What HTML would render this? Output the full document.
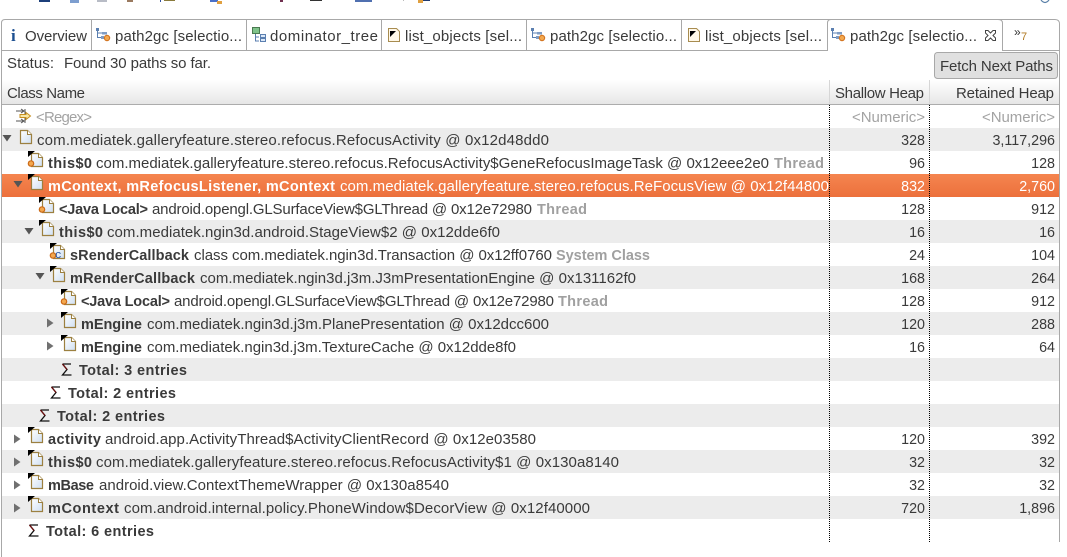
<!DOCTYPE html>
<html><head><meta charset="utf-8"><style>
html,body{margin:0;padding:0;background:#fff;width:1067px;height:557px;overflow:hidden}
svg{display:block}
text{font-family:"Liberation Sans",sans-serif;font-size:15px;fill:#3a3a3a;white-space:pre}
.b{font-weight:bold;font-size:14.5px}
.g{fill:#a0a0a0;font-weight:bold;font-size:14.5px}
.f{fill:#a3a3a3}
.w{fill:#fff}
.e{text-anchor:end}
.nums text{font-size:14.3px}
</style></head><body>
<svg width="1067" height="557" viewBox="0 0 1067 557" xmlns="http://www.w3.org/2000/svg">
<defs>
<linearGradient id="hd" x1="0" y1="0" x2="0" y2="1"><stop offset="0" stop-color="#fff"/><stop offset="1" stop-color="#e6e6e6"/></linearGradient>
<linearGradient id="sel" x1="0" y1="0" x2="0" y2="1"><stop offset="0" stop-color="#f5854f"/><stop offset="1" stop-color="#ec703c"/></linearGradient>
<linearGradient id="pg" x1="0" y1="0" x2="1" y2="1"><stop offset="0" stop-color="#fff"/><stop offset="1" stop-color="#cfdff2"/></linearGradient>
<g id="page"><path d="M.5.5H7.5L11.5 4.5V13.5H.5Z" fill="url(#pg)" stroke="#9c8040" stroke-width="1.2"/><path d="M7.5.5V4.5H11.5" fill="#fff" stroke="#9c8040"/></g>
<g id="tri"><path d="M0 0H7L0 6Z" fill="#000"/></g>
<g id="obj"><use href="#page" x="3" y="2"/><use href="#tri"/></g>
<g id="root"><use href="#page" x="3" y="2"/><use href="#tri"/><circle cx="3" cy="12.5" r="2.7" fill="#f3a84f" stroke="#cc6a18" stroke-width="1.2"/></g>
<g id="sum"><path d="M.5 1H9M.5 1L5 6.5L.5 12H9.5" fill="none" stroke="#111" stroke-width="1.3"/><path d="M.5 1L5 6.5" stroke="#701010" stroke-width="1.3"/></g>
<path id="ad" d="M-4.5-3H4.5L0 3.5Z" fill="#555"/>
<path id="ar" d="M-3-4.5L3.5 0L-3 4.5Z" fill="#707070"/>
<g id="p2g"><path d="M1.5 1V9.5H7M1.5 5H7" fill="none" stroke="#5b7fb0"/><rect x="0" y="0" width="3" height="3" fill="#5b7fb0"/><rect x="6" y="4" width="5" height="2.5" fill="#7f9cc4"/><rect x="5" y="8" width="3" height="3" fill="#7f9cc4"/><circle cx="11" cy="10" r="2.7" fill="#f3a84f" stroke="#d0701c"/></g>
<g id="lst"><path d="M.5.5H8.5L11.5 3.5V13.5H.5Z" fill="#fff8e8" stroke="#a88c50"/><path d="M2 3H8L2 9Z" fill="#000"/></g>
</defs>

<!-- top toolbar fragments -->
<g>
<rect x="39" y="0" width="11" height="2" fill="#1c3f7a"/><rect x="70" y="0" width="9" height="3" fill="#7d9ecf"/><rect x="97" y="0" width="10" height="2" fill="#b8bcc6"/>
<rect x="127" y="0" width="6" height="2" fill="#9a7a60"/><rect x="160" y="0" width="1" height="2" fill="#3050a0"/><rect x="164" y="0" width="11" height="1" fill="#8a7a3c"/>
<rect x="210" y="0" width="8" height="2" fill="#4a70c8"/><rect x="217" y="1" width="5" height="3" fill="#e0a040"/><rect x="280" y="0" width="3" height="2" fill="#703050"/>
<rect x="310" y="0" width="12" height="1" fill="#333"/><rect x="355" y="0" width="17" height="2" fill="#5070b0"/><rect x="403" y="0" width="1" height="1" fill="#bbb"/>
<rect x="418" y="0" width="5" height="3" fill="#e0a040"/><rect x="423" y="0" width="7" height="1" fill="#203a70"/><path d="M1041 0Q1045 5 1049 0" fill="none" stroke="#5a80a8" stroke-width="1.2"/>
</g>

<!-- frame -->
<path d="M1.5 557V23Q1.5 19.5 5 19.5H1055Q1059.5 19.5 1059.5 24V542" fill="none" stroke="#a8a8a8"/>
<path d="M1.5 50.5H827.5V23Q827.5 19.5 831 19.5H998Q1002.5 19.5 1002.5 23V50.5H1059.5" fill="#fff" stroke="#a8a8a8"/>
<path d="M91.5 20V50M246.5 20V50M381.5 20V50M526.5 20V50M681.5 20V50" stroke="#a8a8a8"/>

<!-- tabs -->
<text x="11" y="41" style="font-family:'Liberation Serif',serif;font-weight:bold;font-size:17px;fill:#1c4f90">i</text>
<text x="25" y="41" textLength="62">Overview</text>
<use href="#p2g" x="96" y="28"/><text x="115" y="41" textLength="127">path2gc [selectio...</text>
<g transform="translate(252,27)"><rect x=".5" y=".5" width="7" height="6" fill="#7fc38a" stroke="#4a7a50"/><path d="M3.5 7V14H7M3.5 10H7" fill="none" stroke="#5b7fb0"/><rect x="8.5" y="7.5" width="5" height="3" fill="#dbe8f8" stroke="#5b7fb0"/><rect x="8.5" y="11.5" width="5" height="3" fill="#dbe8f8" stroke="#5b7fb0"/></g>
<text x="270" y="41" textLength="108">dominator_tree</text>
<use href="#lst" x="388" y="28"/><text x="405" y="41" textLength="117">list_objects [sel...</text>
<use href="#p2g" x="531" y="28"/><text x="550" y="41" textLength="127">path2gc [selectio...</text>
<use href="#lst" x="688" y="28"/><text x="705" y="41" textLength="117">list_objects [sel...</text>
<use href="#p2g" x="831" y="28"/><text x="850" y="41" textLength="127">path2gc [selectio...</text>
<path d="M985.5 30.5H988L990.5 33L993 30.5H995.5V33L993 35.5L995.5 38V40.5H993L990.5 38L988 40.5H985.5V38L988 35.5L985.5 33Z" fill="#fff" stroke="#444" stroke-width="1"/>
<text x="1014" y="36" style="font-size:12px;fill:#333">»</text><text x="1021" y="40" style="font-size:11px;fill:#b07820">7</text>

<!-- status -->
<text x="7" y="68" textLength="47">Status:</text>
<text x="64" y="68" textLength="147">Found 30 paths so far.</text>
<rect x="934.5" y="52.5" width="123" height="26" rx="3" fill="#e0e0e0" stroke="#a8a8a8"/>
<text x="940" y="71" textLength="113">Fetch Next Paths</text>

<!-- header -->
<rect x="2" y="80" width="1057" height="24" fill="url(#hd)"/>
<rect x="2" y="104" width="1057" height="1" fill="#acacac"/>
<rect x="829" y="80" width="1" height="24" fill="#d6d6d6"/><rect x="929" y="80" width="1" height="24" fill="#d6d6d6"/>
<text x="7" y="98" textLength="78">Class Name</text>
<text x="835" y="98" textLength="89">Shallow Heap</text>
<text x="956" y="98" textLength="98">Retained Heap</text>

<!-- filter -->
<g transform="translate(15,108)"><path d="M1 3H9M1 13H9" stroke="#555"/><path d="M6 1L9 3L6 5M6 11L9 13L6 15M10 1V15" fill="none" stroke="#555"/><path d="M5 6.5H11V4.5L15.5 8L11 11.5V9.5H5Z" fill="#f8e8a8" stroke="#c89020"/></g>
<text x="36" y="122" textLength="56" class="f">&lt;Regex&gt;</text>
<text x="852" y="122" textLength="73" class="f">&lt;Numeric&gt;</text>
<text x="982" y="122" textLength="73" class="f">&lt;Numeric&gt;</text>

<!-- bands -->
<g fill="#ececec">
<rect x="2" y="128" width="1057" height="23"/><rect x="2" y="220" width="1057" height="23"/><rect x="2" y="266" width="1057" height="23"/>
<rect x="2" y="312" width="1057" height="23"/><rect x="2" y="358" width="1057" height="23"/><rect x="2" y="404" width="1057" height="23"/>
<rect x="2" y="450" width="1057" height="23"/><rect x="2" y="496" width="1057" height="23"/>
</g>
<rect x="2" y="174" width="1057" height="23" fill="url(#sel)"/>

<!-- dotted columns -->
<path d="M829.5 105V542M929.5 105V542" stroke="#000" stroke-dasharray="1 1"/>

<!-- rows: icons -->
<use href="#ad" x="7" y="138"/><use href="#page" x="20" y="130"/>
<use href="#root" x="28" y="151"/>
<use href="#ad" x="18" y="184"/><use href="#obj" x="28" y="174"/>
<use href="#root" x="39" y="197"/>
<use href="#ad" x="29" y="231"/><use href="#obj" x="39" y="220"/>
<use href="#root" x="50" y="243"/><text x="55" y="258" style="font-size:11px;fill:#2050a0;font-family:'Liberation Mono',monospace">c</text>
<use href="#ad" x="40" y="276"/><use href="#obj" x="50" y="266"/>
<use href="#root" x="61" y="289"/>
<use href="#ar" x="50" y="323"/><use href="#obj" x="61" y="312"/>
<use href="#ar" x="50" y="346"/><use href="#obj" x="61" y="335"/>
<use href="#sum" x="62" y="363"/><use href="#sum" x="51" y="386"/><use href="#sum" x="40" y="409"/>
<use href="#ar" x="17" y="439"/><use href="#obj" x="28" y="427"/>
<use href="#ar" x="17" y="462"/><use href="#obj" x="28" y="450"/>
<use href="#ar" x="17" y="485"/><use href="#obj" x="28" y="473"/>
<use href="#ar" x="17" y="508"/><use href="#obj" x="28" y="496"/>
<use href="#sum" x="29" y="524"/>

<!-- rows: text -->
<text x="37" y="145" textLength="512">com.mediatek.galleryfeature.stereo.refocus.RefocusActivity @ 0x12d48dd0</text>
<text x="48" y="168" textLength="44" class="b">this$0</text><text x="96" y="168" textLength="673">com.mediatek.galleryfeature.stereo.refocus.RefocusActivity$GeneRefocusImageTask @ 0x12eee2e0</text><text x="774" y="168" textLength="50" class="g">Thread</text>
<text x="48" y="191" textLength="287" class="b w">mContext, mRefocusListener, mContext</text><text x="340" y="191" textLength="489" class="w">com.mediatek.galleryfeature.stereo.refocus.ReFocusView @ 0x12f44800</text>
<text x="59" y="214" textLength="89" class="b">&lt;Java Local&gt;</text><text x="152" y="214" textLength="380">android.opengl.GLSurfaceView$GLThread @ 0x12e72980</text><text x="537" y="214" textLength="50" class="g">Thread</text>
<text x="59" y="237" textLength="44" class="b">this$0</text><text x="107" y="237" textLength="393">com.mediatek.ngin3d.android.StageView$2 @ 0x12dde6f0</text>
<text x="70" y="260" textLength="119" class="b">sRenderCallback</text><text x="194" y="260" textLength="358">class com.mediatek.ngin3d.Transaction @ 0x12ff0760</text><text x="556" y="260" textLength="94" class="g">System Class</text>
<text x="70" y="283" textLength="125" class="b">mRenderCallback</text><text x="200" y="283" textLength="436">com.mediatek.ngin3d.j3m.J3mPresentationEngine @ 0x131162f0</text>
<text x="81" y="306" textLength="89" class="b">&lt;Java Local&gt;</text><text x="174" y="306" textLength="380">android.opengl.GLSurfaceView$GLThread @ 0x12e72980</text><text x="558" y="306" textLength="50" class="g">Thread</text>
<text x="81" y="329" textLength="61" class="b">mEngine</text><text x="147" y="329" textLength="402">com.mediatek.ngin3d.j3m.PlanePresentation @ 0x12dcc600</text>
<text x="81" y="352" textLength="61" class="b">mEngine</text><text x="147" y="352" textLength="369">com.mediatek.ngin3d.j3m.TextureCache @ 0x12dde8f0</text>
<text x="79" y="375" textLength="108" class="b">Total: 3 entries</text>
<text x="68" y="398" textLength="108" class="b">Total: 2 entries</text>
<text x="57" y="421" textLength="108" class="b">Total: 2 entries</text>
<text x="48" y="444" textLength="53" class="b">activity</text><text x="105" y="444" textLength="431">android.app.ActivityThread$ActivityClientRecord @ 0x12e03580</text>
<text x="48" y="467" textLength="44" class="b">this$0</text><text x="96" y="467" textLength="523">com.mediatek.galleryfeature.stereo.refocus.RefocusActivity$1 @ 0x130a8140</text>
<text x="48" y="490" textLength="46" class="b">mBase</text><text x="99" y="490" textLength="350">android.view.ContextThemeWrapper @ 0x130a8540</text>
<text x="48" y="513" textLength="71" class="b">mContext</text><text x="124" y="513" textLength="466">com.android.internal.policy.PhoneWindow$DecorView @ 0x12f40000</text>
<text x="46" y="536" textLength="108" class="b">Total: 6 entries</text>

<!-- numbers -->
<g class="nums">
<text x="925" y="145" class="e">328</text><text x="1055" y="145" class="e">3,117,296</text>
<text x="925" y="168" class="e">96</text><text x="1055" y="168" class="e">128</text>
<text x="925" y="191" class="e w">832</text><text x="1055" y="191" class="e w">2,760</text>
<text x="925" y="214" class="e">128</text><text x="1055" y="214" class="e">912</text>
<text x="925" y="237" class="e">16</text><text x="1055" y="237" class="e">16</text>
<text x="925" y="260" class="e">24</text><text x="1055" y="260" class="e">104</text>
<text x="925" y="283" class="e">168</text><text x="1055" y="283" class="e">264</text>
<text x="925" y="306" class="e">128</text><text x="1055" y="306" class="e">912</text>
<text x="925" y="329" class="e">120</text><text x="1055" y="329" class="e">288</text>
<text x="925" y="352" class="e">16</text><text x="1055" y="352" class="e">64</text>
<text x="925" y="444" class="e">120</text><text x="1055" y="444" class="e">392</text>
<text x="925" y="467" class="e">32</text><text x="1055" y="467" class="e">32</text>
<text x="925" y="490" class="e">32</text><text x="1055" y="490" class="e">32</text>
<text x="925" y="513" class="e">720</text><text x="1055" y="513" class="e">1,896</text>
</g>
</svg>
</body></html>
